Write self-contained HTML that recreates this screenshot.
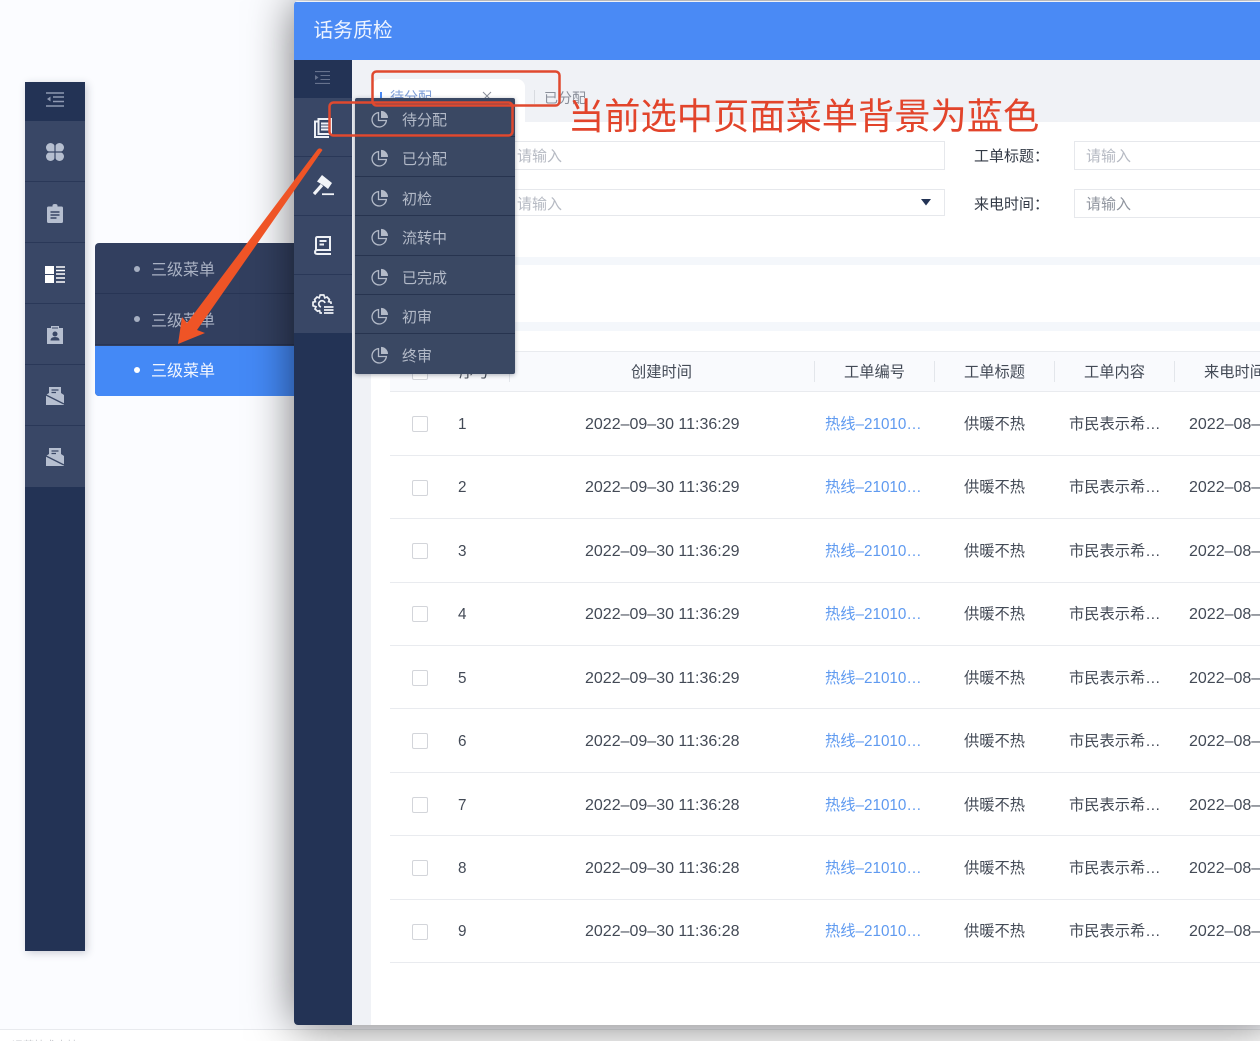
<!DOCTYPE html>
<html lang="zh"><head><meta charset="utf-8"><title>话务质检</title>
<style>
html,body{margin:0;padding:0;width:1260px;height:1041px;overflow:hidden;background:#fbfcff}
body{position:relative;font-family:"Liberation Sans","Noto Sans CJK SC",sans-serif;color:#3a3f4a}
div,span,svg{position:absolute;display:block}
.t{white-space:nowrap;line-height:20px}
#foot{left:0;top:1029px;width:1260px;height:12px;background:#fff;border-top:1px solid #e8eaee;box-sizing:border-box}
#ls{left:25px;top:82px;width:60px;height:869px;background:#233355;box-shadow:2px 2px 8px rgba(30,40,70,.22)}
.li{left:0;width:60px;height:60px;background:#394766;border-bottom:1px solid #2a3858}
#sub{left:95px;top:243px;width:205px;height:153px;background:#323f5f;border-radius:4px;overflow:hidden}
.si{left:0;width:205px;height:51px;border-bottom:1px solid #283555;box-sizing:border-box}
.si b{position:absolute;left:39px;top:23px;width:6px;height:6px;border-radius:50%;background:#a6afc2}
.si span{left:56px;top:18px;font-size:16px;line-height:20px;color:#a9b1c3;white-space:nowrap}
#win{left:294px;top:1px;width:980px;height:1024px;background:#f0f2f6;border-radius:4px 0 0 4px;box-shadow:0 0 46px rgba(0,0,0,.55);overflow:hidden}
#bar{left:0;top:1px;width:980px;height:58px;background:#4a8af5}
#ms{left:0;top:59px;width:58px;height:965px;background:#233355}
.mi{left:0;width:58px;background:#394766;border-bottom:1px solid #2a3858}
#pop{left:355px;top:98px;width:160px;height:276px;background:#3a4863;border-radius:2px;box-shadow:0 1px 5px rgba(20,30,50,.35)}
.pi{left:0;width:160px;height:39.4px;border-bottom:1px solid #27344f;box-sizing:border-box}
.pi:last-child{border:0}
.pi svg{left:16px;top:12px}
.pi span{left:47px;top:13px;font-size:15px;line-height:20px;color:#b3bac8;white-space:nowrap}
.inp{background:#fff;border:1px solid #e6e8ec;box-sizing:border-box}
.ph{font-size:15px;line-height:20px;color:#b6bac3;white-space:nowrap}
.lab{font-size:15px;line-height:20px;color:#333a46;white-space:nowrap}
.th{font-size:15.25px;line-height:20px;color:#434a56;white-space:nowrap;top:363px}
.sep{top:361px;width:1px;height:21px;background:#e3e6eb}
.line{left:390px;width:870px;height:1px;background:#e9ebef}
.cb{left:412px;width:16px;height:16px;border:1px solid #d3d5da;border-radius:2px;box-sizing:border-box;background:#fff}
.n,.d,.l,.g,.c,.e{font-size:15.25px;line-height:20px;white-space:nowrap;color:#434a56;margin-top:1px}
.n{left:458px}
.d{left:585px;font-size:16px}
.l{left:825px;color:#5f9af0}
.g{left:964px}
.c{left:1069px}
.e{left:1189px;font-size:16px}
.ann{left:568px;top:94px;font-size:36.250px;line-height:46px;color:#e2442b;white-space:nowrap;letter-spacing:0}
</style></head><body>
<svg width="0" height="0" style="position:absolute"><defs>
<symbol id="pie" viewBox="0 0 18 18"><path d="M7.500 2.600A7.200 7.200 0 1 0 15.400 10.500H7.500Z" fill="none" stroke="#b3bac8" stroke-width="1.300"/><path d="M10 .9A7 7 0 0 1 17 8H10Z" fill="#b3bac8"/></symbol>
<symbol id="mail" viewBox="0 0 18 18"><path d="M3 0h12v6l3 2v10H0V8l3-2Z" fill="#b6bfd0"/><path d="M5.500 3h7M5.500 5.500h4.500" stroke="#394766" stroke-width="1.200"/><path d="M0 8 18 17" stroke="#394766" stroke-width="1.400"/></symbol>
</defs></svg>

<div id="foot"><div class="t" style="left:12px;top:6px;font-size:11px;color:#c5c7cc">运营技术支持</div></div>

<div id="ls">
<svg style="left:21px;top:10px" width="18" height="15" viewBox="0 0 18 15" fill="none" stroke="#8e99b1" stroke-width="1.400"><path d="M0 1h18M7 5h11M7 9.500h11M0 14h18"/><path d="M4.500 4.500v5L1 7Z" fill="#8e99b1" stroke="none"/></svg>
<div class="li" style="top:39px"><svg style="left:21px;top:22px" width="18" height="18" viewBox="0 0 18 18" fill="#b6bfd0"><circle cx="4.500" cy="4.500" r="4.500"/><circle cx="13.500" cy="4.500" r="4.500"/><circle cx="4.500" cy="13.500" r="4.500"/><circle cx="13.500" cy="13.500" r="4.500"/><path d="M4 4h10v10H4Z"/><path d="M9 0v18M0 9h18" stroke="#394766" stroke-width="1.200"/></svg></div>
<div class="li" style="top:100px"><svg style="left:22px;top:22px" width="16" height="19" viewBox="0 0 16 19"><path d="M1.500 2.500H5.500V1.500Q5.500 0 8 0T10.500 1.500V2.500H14.500Q16 2.500 16 4V17.500Q16 19 14.500 19H1.500Q0 19 0 17.500V4Q0 2.500 1.500 2.500Z" fill="#b6bfd0"/><path d="M3.500 8h9M3.500 11h9M3.500 14h6" stroke="#394766" stroke-width="1.400"/></svg></div>
<div class="li" style="top:161px"><svg style="left:20px;top:23px" width="20" height="17" viewBox="0 0 20 17"><path d="M0 0h9v8H0ZM0 9h9v8H0Z" fill="#fff"/><path d="M11 1h9M11 4.500h9M11 8h9M11 12h9M11 16h9" stroke="#fff" stroke-width="1.500"/></svg></div>
<div class="li" style="top:222px"><svg style="left:22px;top:22px" width="16" height="18" viewBox="0 0 16 18"><path d="M4 2V0h8v2h4v16H0V2Z" fill="#b6bfd0"/><path d="M5 2h6" stroke="#394766"/><circle cx="8" cy="8" r="2.500" fill="#394766"/><path d="M3.500 14.500Q3.500 11 8 11t4.500 3.500Z" fill="#394766"/></svg></div>
<div class="li" style="top:283px"><svg style="left:21px;top:22px" width="18" height="18"><use href="#mail"/></svg></div>
<div class="li" style="top:344px;border:0;height:61px"><svg style="left:21px;top:22px" width="18" height="18"><use href="#mail"/></svg></div>
</div>

<div id="sub">
<div class="si" style="top:0"><b></b><span>三级菜单</span></div>
<div class="si" style="top:51px"><b style="top:22px"></b><span>三级菜单</span></div>
<div class="si" style="top:103px;height:50px;background:#4489f6;border:0"><b style="background:#fff;top:21px"></b><span style="color:#f2f6ff;top:16px">三级菜单</span></div>
</div>

<div id="win">
<div id="bar"><div class="t" style="left:19.500px;top:19px;font-size:19.800px;line-height:20px;color:#eef4ff">话务质检</div></div>
<div id="ms">
<svg style="left:21px;top:11px" width="15" height="13" viewBox="0 0 15 13" fill="none" stroke="#66728d" stroke-width="1.100"><path d="M0 .6h15M5.500 4.500H15M5.500 8.500H15M0 12.400h15"/><path d="M0 4v5l3.500-2.500Z" fill="#66728d" stroke="none"/></svg>
<div class="mi" style="top:38px;height:58px"><svg style="left:20px;top:20px" width="19" height="20" viewBox="0 0 19 20" fill="none" stroke="#eef1f6" stroke-width="2"><path d="M4 3.500H1V19H15"/><path d="M4.500 1H17V16H4.500Z"/><path d="M7 5.500h8M7 8.500h8M7 11.500h8" stroke-width="2"/></svg></div>
<div class="mi" style="top:97px;height:58px"><svg style="left:19px;top:18px" width="21" height="21" viewBox="0 0 21 21"><path d="M9 0 19 8 15 14 12.500 12 9 9.500 4 6.500Z" fill="#f2f4f8"/><path d="M9 10 1 19" stroke="#f2f4f8" stroke-width="3.200"/><path d="M9 19.200H21" stroke="#f2f4f8" stroke-width="1.800"/></svg></div>
<div class="mi" style="top:156px;height:58px"><svg style="left:20px;top:20px" width="18" height="19" viewBox="0 0 18 19" fill="none" stroke="#eef1f6" stroke-width="2"><path d="M2 14V2.500Q2 1 3.500 1H16V14H3.500Q1 14 1 16T3.500 18H17"/><path d="M5.500 5h7M5.500 8.500h4.500"/></svg></div>
<div class="mi" style="top:215px;height:58px;border:0"><svg style="left:18px;top:19px" width="22" height="22" viewBox="0 0 22 22" fill="none" stroke="#eef1f6" stroke-width="1.700"><path d="M10 19H8.200L7.600 16.700 5.500 17.200 3 15 4 12.800 1 11.800V8.200L3.400 7.600 2.600 5.500 5 3 7.200 3.900 8.200 1H11.800L12.800 3.900 15 3 17.400 5.500 16.600 7.600 19 8.200V10"/><path d="M9 13A3.200 3.200 0 1 1 13 9"/><path d="M12 13h9.500M12 16h9.500M12 19h9.500" stroke-width="1.800"/></svg></div>
</div>

<div style="left:78px;top:78px;width:153px;height:60px;background:#fff;border-radius:8px 8px 0 0"></div>
<div style="left:86px;top:91px;width:2px;height:16px;background:#4a8af5"></div>
<div class="t" style="left:96px;top:86px;font-size:14px;color:#7f9fd8">待分配</div>
<svg style="left:188px;top:90px" width="10" height="10" viewBox="0 0 10 10" stroke="#8a8f9a" stroke-width="1"><path d="M1 1l8 8M9 1 1 9"/></svg>
<div style="left:240px;top:89px;width:1px;height:14px;background:#d8dbe0"></div>
<div class="t" style="left:250px;top:87px;font-size:14px;color:#8a8f9a">已分配</div>
<div style="left:77px;top:121px;width:903px;height:903px;background:#fff"></div>
</div>

<div style="left:505px;top:257px;width:755px;height:8px;background:#f4f7fb"></div>
<div style="left:505px;top:322px;width:755px;height:9px;background:#f4f7fb"></div>

<div class="inp" style="left:500px;top:141px;width:445px;height:29px"></div>
<div class="inp" style="left:500px;top:189px;width:445px;height:27px"></div>
<div class="ph" style="left:517px;top:147px">请输入</div>
<div class="ph" style="left:517px;top:195px">请输入</div>
<svg style="left:921px;top:199px" width="10" height="7" viewBox="0 0 10 7"><path d="M0 0h10L5 6.500Z" fill="#233355"/></svg>
<div class="lab" style="left:974px;top:147px">工单标题：</div>
<div class="lab" style="left:974px;top:195px">来电时间：</div>
<div class="inp" style="left:1074px;top:141px;width:200px;height:29px"></div>
<div class="inp" style="left:1074px;top:189px;width:200px;height:29px"></div>
<div class="ph" style="left:1086px;top:147px">请输入</div>
<div class="ph" style="left:1086px;top:195px;color:#8f949e">请输入</div>

<div style="left:390px;top:351px;width:870px;height:41px;background:#f9fafd;border-top:1px solid #e9ebef;border-bottom:1px solid #e9ebef;box-sizing:border-box"></div>
<div class="cb" style="top:364px"></div>
<div class="th" style="left:459px">序号</div>
<div class="sep" style="left:509px"></div>
<div class="th" style="left:631px">创建时间</div>
<div class="sep" style="left:814px"></div>
<div class="th" style="left:844px">工单编号</div>
<div class="sep" style="left:934px"></div>
<div class="th" style="left:964px">工单标题</div>
<div class="sep" style="left:1054px"></div>
<div class="th" style="left:1084px">工单内容</div>
<div class="sep" style="left:1174px"></div>
<div class="th" style="left:1204px">来电时间</div>

<div class="cb" style="top:416px"></div><div class="n" style="top:414px">1</div><div class="d" style="top:414px">2022–09–30 11:36:29</div><div class="l" style="top:414px">热线–21010…</div><div class="g" style="top:414px">供暖不热</div><div class="c" style="top:414px">市民表示希…</div><div class="e" style="top:414px">2022–08–</div><div class="line" style="top:455px"></div>
<div class="cb" style="top:480px"></div><div class="n" style="top:477px">2</div><div class="d" style="top:477px">2022–09–30 11:36:29</div><div class="l" style="top:477px">热线–21010…</div><div class="g" style="top:477px">供暖不热</div><div class="c" style="top:477px">市民表示希…</div><div class="e" style="top:477px">2022–08–</div><div class="line" style="top:518px"></div>
<div class="cb" style="top:543px"></div><div class="n" style="top:541px">3</div><div class="d" style="top:541px">2022–09–30 11:36:29</div><div class="l" style="top:541px">热线–21010…</div><div class="g" style="top:541px">供暖不热</div><div class="c" style="top:541px">市民表示希…</div><div class="e" style="top:541px">2022–08–</div><div class="line" style="top:582px"></div>
<div class="cb" style="top:606px"></div><div class="n" style="top:604px">4</div><div class="d" style="top:604px">2022–09–30 11:36:29</div><div class="l" style="top:604px">热线–21010…</div><div class="g" style="top:604px">供暖不热</div><div class="c" style="top:604px">市民表示希…</div><div class="e" style="top:604px">2022–08–</div><div class="line" style="top:645px"></div>
<div class="cb" style="top:670px"></div><div class="n" style="top:668px">5</div><div class="d" style="top:668px">2022–09–30 11:36:29</div><div class="l" style="top:668px">热线–21010…</div><div class="g" style="top:668px">供暖不热</div><div class="c" style="top:668px">市民表示希…</div><div class="e" style="top:668px">2022–08–</div><div class="line" style="top:708px"></div>
<div class="cb" style="top:733px"></div><div class="n" style="top:731px">6</div><div class="d" style="top:731px">2022–09–30 11:36:28</div><div class="l" style="top:731px">热线–21010…</div><div class="g" style="top:731px">供暖不热</div><div class="c" style="top:731px">市民表示希…</div><div class="e" style="top:731px">2022–08–</div><div class="line" style="top:772px"></div>
<div class="cb" style="top:797px"></div><div class="n" style="top:795px">7</div><div class="d" style="top:795px">2022–09–30 11:36:28</div><div class="l" style="top:795px">热线–21010…</div><div class="g" style="top:795px">供暖不热</div><div class="c" style="top:795px">市民表示希…</div><div class="e" style="top:795px">2022–08–</div><div class="line" style="top:835px"></div>
<div class="cb" style="top:860px"></div><div class="n" style="top:858px">8</div><div class="d" style="top:858px">2022–09–30 11:36:28</div><div class="l" style="top:858px">热线–21010…</div><div class="g" style="top:858px">供暖不热</div><div class="c" style="top:858px">市民表示希…</div><div class="e" style="top:858px">2022–08–</div><div class="line" style="top:899px"></div>
<div class="cb" style="top:924px"></div><div class="n" style="top:921px">9</div><div class="d" style="top:921px">2022–09–30 11:36:28</div><div class="l" style="top:921px">热线–21010…</div><div class="g" style="top:921px">供暖不热</div><div class="c" style="top:921px">市民表示希…</div><div class="e" style="top:921px">2022–08–</div><div class="line" style="top:962px"></div>

<div id="pop">
<div class="pi" style="top:0"><svg width="18" height="18"><use href="#pie"/></svg><span>待分配</span></div>
<div class="pi" style="top:39.400px"><svg width="18" height="18"><use href="#pie"/></svg><span>已分配</span></div>
<div class="pi" style="top:78.800px"><svg width="18" height="18"><use href="#pie"/></svg><span>初检</span></div>
<div class="pi" style="top:118.200px"><svg width="18" height="18"><use href="#pie"/></svg><span>流转中</span></div>
<div class="pi" style="top:157.600px"><svg width="18" height="18"><use href="#pie"/></svg><span>已完成</span></div>
<div class="pi" style="top:197px"><svg width="18" height="18"><use href="#pie"/></svg><span>初审</span></div>
<div class="pi" style="top:236.400px"><svg width="18" height="18"><use href="#pie"/></svg><span>终审</span></div>
</div>

<svg style="left:0;top:0" width="1260" height="1041" viewBox="0 0 1260 1041" fill="none">
<rect x="372.500" y="71.500" width="187" height="34" rx="4" stroke="#e0492f" stroke-width="2.500"/>
<rect x="329.500" y="102.500" width="183" height="33" rx="4" stroke="#e0492f" stroke-width="2.500"/>
<path d="M317.500 149.500Q320 147 322.500 150L197 330 205 333 178 344 182 317 187 323Z" fill="#ef5426"/>
</svg>
<div class="ann">当前选中页面菜单背景为蓝色</div>
</body></html>
